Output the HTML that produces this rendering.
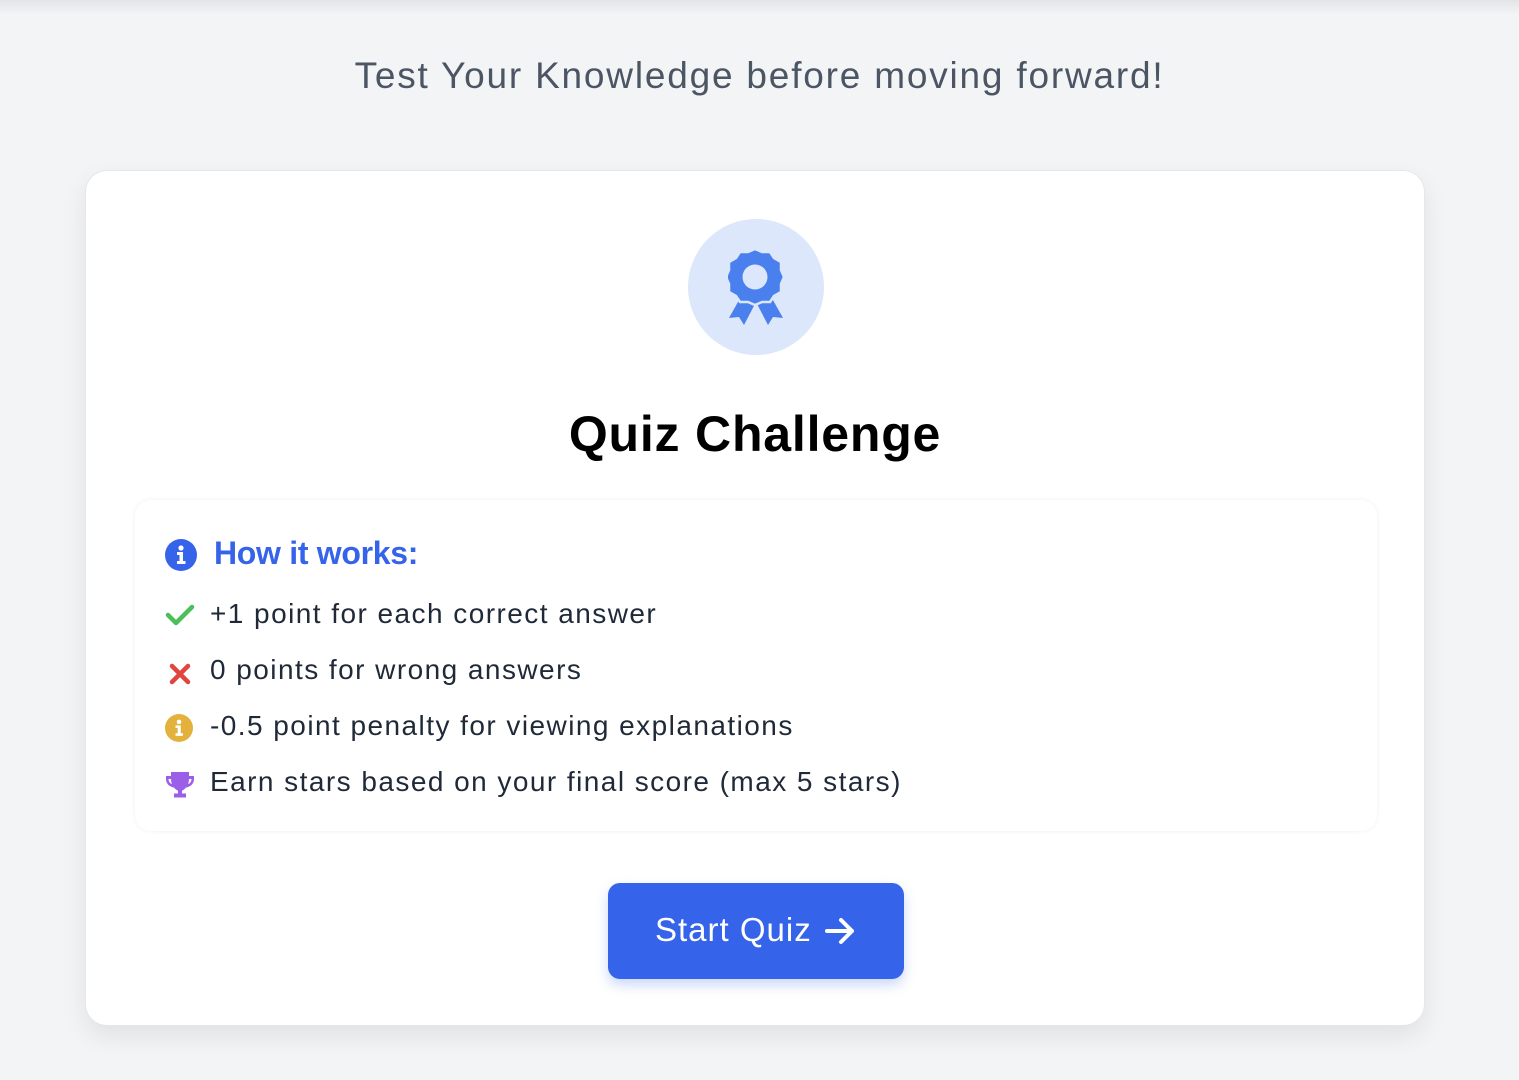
<!DOCTYPE html>
<html><head><meta charset="utf-8"><style>
*{margin:0;padding:0;box-sizing:border-box}
body{width:1519px;height:1080px;background:#f3f4f6;font-family:"Liberation Sans",sans-serif;position:relative;overflow:hidden}
.topshadow{position:absolute;left:0;top:0;width:1519px;height:14px;background:linear-gradient(#e3e4e7,#f3f4f6)}
h1{position:absolute;top:55px;left:0;width:1519px;text-align:center;font-weight:400;font-size:37px;color:#4b5563;letter-spacing:1.8px}
.card{position:absolute;left:85px;top:170px;width:1340px;height:856px;background:#fff;border-radius:22px;border:1px solid #e5e7eb;box-shadow:0 10px 25px rgba(0,0,0,.08)}
.circle{position:absolute;left:602px;top:48px;width:136px;height:136px;border-radius:50%;background:#dce7fb}
.circle svg{position:absolute;left:40px;top:30px}
h2{position:absolute;top:234px;left:0;width:100%;text-align:center;font-size:50px;font-weight:700;color:#000;letter-spacing:0.8px}
.box{position:absolute;left:49px;top:329px;width:1242px;height:331px;border-radius:16px;box-shadow:0 0 6px rgba(0,0,0,.06);background:#fff}
.hw{position:absolute;left:128px;top:364px;font-size:32px;font-weight:700;color:#3563e9;letter-spacing:-0.3px}
.item{position:absolute;left:124px;font-size:28px;color:#1f2937;letter-spacing:1.45px}
.ic{position:absolute;left:79px}
.btn{position:absolute;left:522px;top:712px;width:296px;height:96px;border-radius:12px;background:#3563e9;box-shadow:0 6px 12px rgba(53,99,233,.25);color:#fff;font-size:33px;letter-spacing:1px}
.btn span{position:absolute;left:47px;top:28px}
.btn svg{position:absolute;left:216px;top:33px}
</style></head><body>
<div class="topshadow"></div>
<h1>Test Your Knowledge before moving forward!</h1>
<div class="card">
 <div class="circle"><svg width="58" height="78" viewBox="0 0 58 78">
  <path d="M15 44 L1 69 L11 68 L16 76 L28 53 Z M41 44 L55 69 L45 68 L40 76 L28 53 Z" fill="#4a80ee"/>
  <path d="M27 0 l7 3 8 0 4 6 7 4 0 8 3 7 -3 7 0 8 -7 4 -4 6 -8 0 -7 3 -7 -3 -8 0 -4 -6 -7 -4 0 -8 -3 -7 3 -7 0 -8 7 -4 4 -6 8 0 z" fill="#4a80ee" stroke="#dce7fb" stroke-width="2.5"/>
  <circle cx="27" cy="28" r="12.5" fill="#dce7fb"/>
 </svg></div>
 <h2>Quiz Challenge</h2>
 <div class="box"></div>
 <svg class="ic" style="top:368px" width="32" height="32" viewBox="0 0 32 32"><circle cx="16" cy="16" r="16" fill="#3563e9"/><circle cx="16" cy="9" r="2.6" fill="#fff"/><path d="M12 13h6v9h2.5v3h-8.5v-3h2.5v-6h-2.5z" fill="#fff"/></svg>
 <div class="hw">How it works:</div>
 <svg class="ic" style="top:432px" width="30" height="24" viewBox="0 0 30 24"><path d="M3 12 L11 20 L27 4" fill="none" stroke="#4cbf5a" stroke-width="4.5" stroke-linecap="round" stroke-linejoin="round"/></svg>
 <div class="item" style="top:427px">+1 point for each correct answer</div>
 <svg class="ic" style="left:83px;top:492px" width="22" height="22" viewBox="0 0 22 22"><path d="M3 3L19 19M19 3L3 19" stroke="#e0463d" stroke-width="4.5" stroke-linecap="round"/></svg>
 <div class="item" style="top:483px">0 points for wrong answers</div>
 <svg class="ic" style="top:543px" width="28" height="28" viewBox="0 0 32 32"><circle cx="16" cy="16" r="16" fill="#e3b23c"/><circle cx="16" cy="9" r="2.6" fill="#fff"/><path d="M12 13h6v9h2.5v3h-8.5v-3h2.5v-6h-2.5z" fill="#fff"/></svg>
 <div class="item" style="top:539px">-0.5 point penalty for viewing explanations</div>
 <svg class="ic" style="top:600px" width="30" height="27" viewBox="0 0 30 27"><path d="M6 1h18v4h5v3c0 5-4 8-8 8.5-1.5 2-3.5 3-4 3v3h4v4h-12v-4h4v-3c-.5 0-2.5-1-4-3-4-.5-8-3.5-8-8.5v-3h5zM3.5 8c0 2.5 1.5 4.5 3.5 5-.6-1.5-1-3-1-5zM26.5 8h-2.5c0 2-.4 3.5-1 5 2-.5 3.5-2.5 3.5-5z" fill="#9b5ee8"/></svg>
 <div class="item" style="top:595px">Earn stars based on your final score (max 5 stars)</div>
 <div class="btn"><span>Start Quiz</span><svg width="32" height="30" viewBox="0 0 32 30"><path d="M3 15H28M17 4L28 15L17 26" fill="none" stroke="#fff" stroke-width="4" stroke-linecap="round" stroke-linejoin="round"/></svg></div>
</div>
</body></html>
